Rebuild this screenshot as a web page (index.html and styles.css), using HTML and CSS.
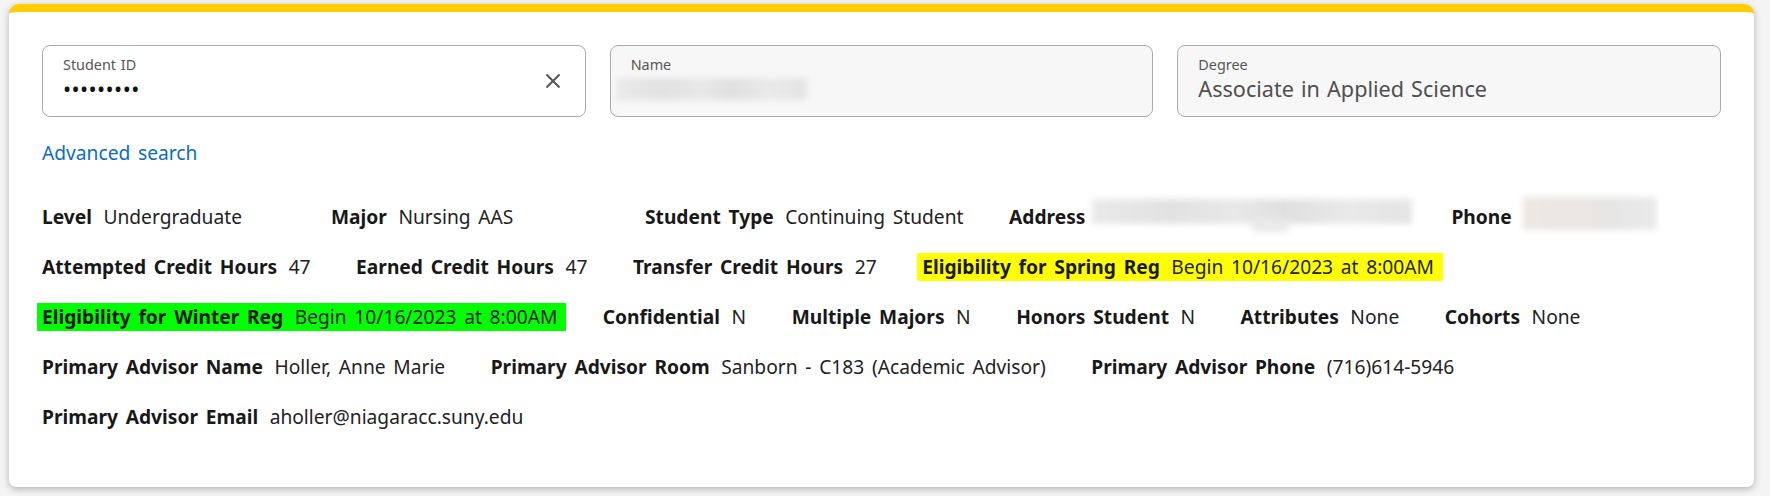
FILE: index.html
```html
<!DOCTYPE html>
<html lang="en">
<head>
<meta charset="utf-8">
<title>Student Lookup</title>
<link rel="stylesheet" href="styles.css">
</head>
<body>
<div class="page">
  <section class="card">
    <div class="fields">
      <div class="field field-active">
        <div class="field-body">
          <span class="field-label">Student ID</span>
          <span class="field-value dots">•••••••••</span>
        </div>
        <svg class="clear-icon" width="20" height="20" viewBox="0 0 20 20" aria-hidden="true">
          <path d="M3.5 3.5 L16.5 16.5 M16.5 3.5 L3.5 16.5" stroke="#555" stroke-width="2" stroke-linecap="butt" fill="none"/>
        </svg>
      </div>
      <div class="field field-readonly">
        <div class="field-body">
          <span class="field-label">Name</span>
          <span class="blur-blob name-blob"></span>
        </div>
      </div>
      <div class="field field-readonly">
        <div class="field-body">
          <span class="field-label">Degree</span>
          <span class="field-value">Associate in Applied Science</span>
        </div>
      </div>
    </div>

    <div class="adv"><a class="adv-link" href="#">Advanced search</a></div>

    <div class="details">
      <div class="detail-row">
        <div class="item item-level"><span class="item-label">Level</span><span class="item-value">Undergraduate</span></div>
        <div class="item item-major"><span class="item-label">Major</span><span class="item-value">Nursing AAS</span></div>
        <div class="item"><span class="item-label">Student Type</span><span class="item-value">Continuing Student</span></div>
        <div class="item item-address"><span class="item-label">Address</span><span class="blur-blob address-blob"></span></div>
        <div class="item"><span class="item-label">Phone</span><span class="blur-blob phone-blob"></span></div>
      </div>
      <div class="detail-row">
        <div class="item"><span class="item-label">Attempted Credit Hours</span><span class="item-value">47</span></div>
        <div class="item"><span class="item-label">Earned Credit Hours</span><span class="item-value">47</span></div>
        <div class="item"><span class="item-label">Transfer Credit Hours</span><span class="item-value">27</span></div>
        <div class="item hl hl-yellow"><span class="item-label">Eligibility for Spring Reg</span><span class="item-value">Begin 10/16/2023 at 8:00AM</span></div>
      </div>
      <div class="detail-row">
        <div class="item hl hl-green"><span class="item-label">Eligibility for Winter Reg</span><span class="item-value">Begin 10/16/2023 at 8:00AM</span></div>
        <div class="item"><span class="item-label">Confidential</span><span class="item-value">N</span></div>
        <div class="item"><span class="item-label">Multiple Majors</span><span class="item-value">N</span></div>
        <div class="item"><span class="item-label">Honors Student</span><span class="item-value">N</span></div>
        <div class="item"><span class="item-label">Attributes</span><span class="item-value">None</span></div>
        <div class="item"><span class="item-label">Cohorts</span><span class="item-value">None</span></div>
      </div>
      <div class="detail-row">
        <div class="item"><span class="item-label">Primary Advisor Name</span><span class="item-value">Holler, Anne Marie</span></div>
        <div class="item"><span class="item-label">Primary Advisor Room</span><span class="item-value">Sanborn - C183 (Academic Advisor)</span></div>
        <div class="item"><span class="item-label">Primary Advisor Phone</span><span class="item-value">(716)614-5946</span></div>
      </div>
      <div class="detail-row">
        <div class="item"><span class="item-label">Primary Advisor Email</span><span class="item-value">aholler@niagaracc.suny.edu</span></div>
      </div>
    </div>
  </section>
</div>
</body>
</html>
```

FILE: styles.css
```css
html, body {
  margin: 0;
  padding: 0;
}

body {
  background: #f4f4f4;
  font-family: "Noto Sans", "Open Sans", sans-serif;
  color: #1c1c1c;
}

.page {
  padding: 4px 16px 10px 9px;
}

.card {
  width: 1745px;
  box-sizing: border-box;
  background: #ffffff;
  border-top: 8px solid #ffcc00;
  border-radius: 10px 10px 7px 7px;
  box-shadow: 0 2px 7px rgba(0, 0, 0, 0.28);
  padding: 33px 33px 55.5px 33px;
}

/* ---------- search fields ---------- */
.fields {
  display: grid;
  grid-template-columns: repeat(3, 1fr);
  column-gap: 24px;
}

.field {
  height: 72px;
  box-sizing: border-box;
  border: 1px solid #ababab;
  border-radius: 8px;
  padding: 9px 20px 0 20px;
  display: flex;
  align-items: flex-start;
}

.field-active {
  background: #ffffff;
}

.field-readonly {
  background: #f7f7f7;
}

.field-body {
  display: flex;
  flex-direction: column;
  min-width: 0;
}

.field-label {
  display: block;
  font-size: 14.4px;
  line-height: 20px;
  color: #555555;
  word-spacing: 1px;
}

.field-value {
  display: block;
  font-size: 21.6px;
  line-height: 28px;
  color: #4f4f4f;
  white-space: nowrap;
  word-spacing: 1.5px;
}

.dots {
  color: #111111;
  letter-spacing: 0.4px;
}

.clear-icon {
  display: block;
  flex-shrink: 0;
  align-self: center;
  margin: -9px 2px 0 auto;
}

/* ---------- blurred (redacted) values ---------- */
.blur-blob {
  display: block;
  flex-shrink: 0;
  background: linear-gradient(90deg, #e9e9e9 0%, #e2e2e2 25%, #e8e8e8 45%, #e0e0e0 60%, #e9e9e9 80%, #e4e4e4 100%);
  filter: blur(3px);
}

.name-blob {
  width: 190px;
  height: 22px;
  margin: 3px 0 0 -14px;
}

.item-address {
  margin-right: -6px;
}

.address-blob {
  position: relative;
  align-self: flex-start;
  width: 320px;
  height: 25px;
  margin: -4px 0 0 -5px;
}

.address-blob::after {
  content: "";
  position: absolute;
  left: 160px;
  top: 20px;
  width: 36px;
  height: 13px;
  background: #eaeaea;
}

.phone-blob {
  align-self: flex-start;
  width: 134px;
  height: 33px;
  margin: -6px 0 0 0;
  background: linear-gradient(90deg, #ede7e1 0%, #eae6e3 40%, #e6e6e6 70%, #eaeaea 100%);
}

/* ---------- advanced search ---------- */
.adv {
  margin-top: 22.2px;
  line-height: 28px;
}

.adv-link {
  font-size: 19.2px;
  line-height: 28px;
  color: #0b6cc5;
  text-decoration: none;
  word-spacing: 2.75px;
}

/* ---------- detail rows ---------- */
.details {
  margin-top: 34.5px;
  display: flex;
  flex-direction: column;
  row-gap: 22.2px;
}

.detail-row {
  display: flex;
  column-gap: 45.5px;
  height: 28px;
}

.item {
  display: flex;
  column-gap: 11.5px;
  flex-shrink: 0;
  font-size: 19.2px;
  line-height: 28px;
  white-space: nowrap;
  word-spacing: 2.75px;
}

.item-label {
  font-weight: 700;
  color: #181818;
}

.item-value {
  color: #222222;
}

.item-level {
  width: 243.5px;
}

.item-major {
  width: 268.5px;
}

.hl {
  padding: 0 9px 0 5px;
  margin: 0 -9px 0 -5px;
}

.hl-yellow {
  background: #ffff00;
}

.hl-green {
  background: #00ff00;
}
```
